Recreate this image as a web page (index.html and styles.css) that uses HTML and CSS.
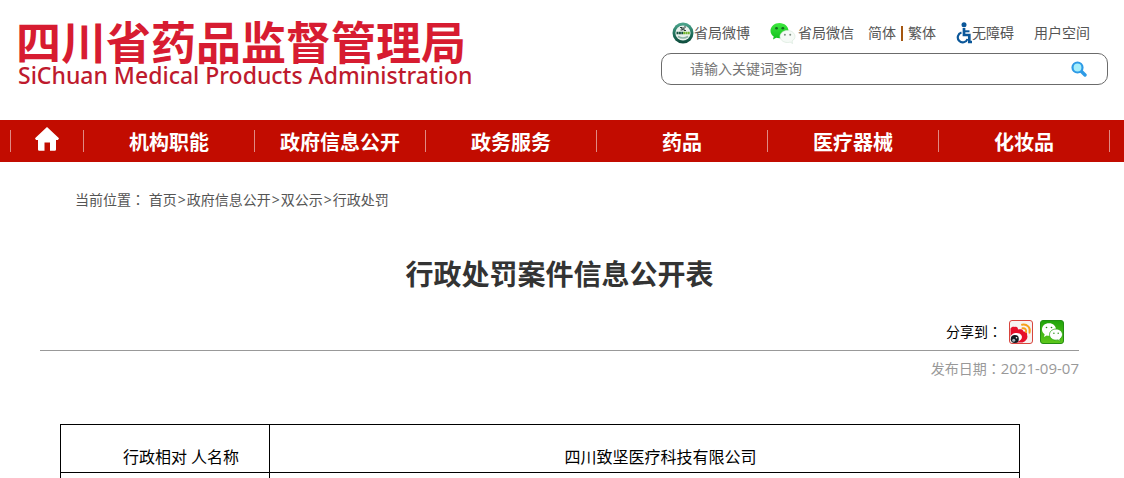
FILE: index.html
```html
<!DOCTYPE html>
<html lang="zh-CN">
<head>
<meta charset="utf-8">
<title>行政处罚案件信息公开表</title>
<link rel="stylesheet" href="styles.css">
</head>
<body>
<header class="header">
  <div class="brand">
    <div class="brand-cn">四川省药品监督管理局</div>
    <div class="brand-en">SiChuan Medical Products Administration</div>
  </div>
  <div class="tools">
    <div class="links">
      <a class="link weibo" href="#">
        <svg width="22" height="22" viewBox="0 0 22 22" aria-hidden="true">
          <defs><linearGradient id="ring" x1="0" y1="0" x2="0" y2="1"><stop offset="0" stop-color="#4fa88f"/><stop offset=".6" stop-color="#1c6b57"/><stop offset="1" stop-color="#0e4a3b"/></linearGradient></defs>
          <circle cx="11" cy="11" r="10.5" fill="url(#ring)"/>
          <circle cx="11" cy="11" r="7.600" fill="#e9f1ec"/>
          <path d="M8 5.500h2M12 5h2M8.500 8h2l-1-2M12 6v2.500h2M11 5v3" stroke="#2b3b36" stroke-width="1" fill="none"/>
          <path d="M4.500 11h6.500" stroke="#17523f" stroke-width="2.600" stroke-dasharray="2 .4"/>
          <path d="M11.200 11h6.500" stroke="#6fb32e" stroke-width="2.600" stroke-dasharray="2 .4"/>
          <path d="M6 14.500q5 3 10 0" stroke="#8fb5a7" stroke-width="1.500" fill="none"/>
        </svg>省局微博</a>
      <a class="link wechat" href="#">
        <svg width="26" height="22" viewBox="0 0 26 22" aria-hidden="true">
          <defs><linearGradient id="green" x1="0" y1="0" x2="0" y2="1"><stop offset="0" stop-color="#3fe83f"/><stop offset="1" stop-color="#10c01c"/></linearGradient></defs>
          <path d="M9.500 1C4.500 1 .5 4.500.5 8.700c0 2.400 1.200 4.400 3.200 5.800L3 17.500l3.200-1.700c1 .3 2.200.5 3.300.5 5 0 9-3.500 9-7.600S14.500 1 9.500 1z" fill="url(#green)"/>
          <ellipse cx="6.500" cy="6.200" rx="1.400" ry="1.200" fill="#126b1d"/><ellipse cx="12.800" cy="6.200" rx="1.400" ry="1.200" fill="#126b1d"/>
          <path d="M17.500 8.500c-4.200 0-7.500 2.700-7.500 6s3.300 6 7.500 6c.9 0 1.800-.1 2.600-.4l2.500 1.400-.6-2.500c1.800-1 3-2.700 3-4.500 0-3.300-3.300-6-7.500-6z" fill="#f5faf6" stroke="#d3e6d7" stroke-width=".6"/>
          <circle cx="14.900" cy="12.800" r="1" fill="#7f9083"/><circle cx="20.200" cy="12.800" r="1" fill="#7f9083"/>
        </svg>省局微信</a>
      <span class="lang"><a class="link" href="#">简体</a><span class="bar"></span><a class="link" href="#">繁体</a></span>
      <a class="link access" href="#">
        <svg width="16" height="22" viewBox="0 0 16 22" aria-hidden="true">
          <circle cx="8" cy="2.700" r="2.500" fill="#0b5799"/>
          <path d="M8 6v7h5.300v7H16" fill="none" stroke="#0b5799" stroke-width="2.700"/>
          <path d="M8 9.300h5.500" stroke="#0b5799" stroke-width="2"/>
          <path d="M5.500 10.500a5 5 0 1 0 6 6.500" fill="none" stroke="#0b5799" stroke-width="2.200"/>
        </svg>无障碍</a>
      <a class="link" href="#">用户空间</a>
    </div>
    <form class="search">
      <input class="search-input" type="text" placeholder="请输入关键词查询" aria-label="请输入关键词查询">
      <button class="search-button" type="button" aria-label="搜索">
        <svg width="16" height="16" viewBox="0 0 16 16" aria-hidden="true">
          <path d="M10 10l4 4" stroke="#2e9be6" stroke-width="3.400" stroke-linecap="round"/>
          <circle cx="6.500" cy="6.500" r="5" fill="#a5eefb" stroke="#2e9be6" stroke-width="2.200"/>
        </svg>
      </button>
    </form>
  </div>
</header>
<nav class="nav">
  <a class="nav-item nav-home" href="#" aria-label="首页">
    <svg width="24" height="24" viewBox="0 0 24 24" aria-hidden="true"><path d="M12 0L24 11.200 23 13h-2v9.500q0 1.200-1.200 1.200H15V15.500H9.500v8.200H4.200Q3 23.700 3 22.500V13H1L0 11.200z" fill="#fff"/></svg>
  </a>
  <a class="nav-item" href="#">机构职能</a>
  <a class="nav-item" href="#">政府信息公开</a>
  <a class="nav-item" href="#">政务服务</a>
  <a class="nav-item" href="#">药品</a>
  <a class="nav-item" href="#">医疗器械</a>
  <a class="nav-item" href="#">化妆品</a>
</nav>
<main class="main">
  <div class="crumbs">当前位置<span class="colon" lang="zh-TW">：</span> <a class="link" href="#">首页</a><span class="sep">&gt;</span><a class="link" href="#">政府信息公开</a><span class="sep">&gt;</span><a class="link" href="#">双公示</a><span class="sep">&gt;</span><a class="link" href="#">行政处罚</a></div>
  <h1 class="title">行政处罚案件信息公开表</h1>
  <div class="share">
    <span>分享到<span class="colon" lang="zh-TW">：</span></span>
    <a class="share-link" href="#" aria-label="微博">
      <svg width="24" height="24" viewBox="0 0 24 24" aria-hidden="true">
        <rect x=".5" y=".5" width="23" height="23" rx="2.500" fill="#f7f3f2" stroke="#d8453e"/>
        <path d="M1.500 8.500c1-2 3-2 4.500-1.500 1.500-.6 3 .3 3 2.500 2.500-.5 5-.3 5.500 2 2.800 0 4 1.600 3.500 3.500 1.300 2.500-.5 6-4.500 7.500H5L1.500 20z" fill="#e60f2a"/>
        <ellipse cx="7" cy="17.500" rx="6" ry="4.500" fill="#fff" transform="rotate(-12 7 17.500)"/>
        <circle cx="5.800" cy="19" r="4" fill="#151b20"/>
        <circle cx="4.700" cy="20.200" r="1.500" fill="#a7b8c2"/><circle cx="7.500" cy="17.700" r=".8" fill="#fff"/>
        <path d="M13 4.700c5-1 9 3 7.500 8M13.500 8.300c2.500-.4 4.200 1.400 3.500 3.700" fill="none" stroke="#f7a01c" stroke-width="1.900" stroke-linecap="round"/>
      </svg>
    </a>
    <a class="share-link" href="#" aria-label="微信">
      <svg width="24" height="24" viewBox="0 0 24 24" aria-hidden="true">
        <defs><linearGradient id="tile" x1="0" y1="0" x2="0" y2="1"><stop offset="0" stop-color="#1fa30b"/><stop offset="1" stop-color="#5fc81b"/></linearGradient></defs>
        <rect x=".5" y=".5" width="23" height="23" rx="2.500" fill="url(#tile)" stroke="#238d13"/>
        <path d="M9 3.200c-4.200 0-7 2.700-7 6.200 0 2 1 3.700 2.600 4.800L4 17l2.700-1.500c.7.200 1.500.3 2.300.3 4 0 7-2.700 7-6.300S13 3.200 9 3.200z" fill="#fff"/>
        <circle cx="6.500" cy="7.500" r=".8" fill="#238d13"/><circle cx="11.500" cy="7.500" r=".8" fill="#238d13"/>
        <path d="M16 9c-3.600 0-6.500 2.500-6.500 5.600s2.900 5.600 6.500 5.600c.7 0 1.400-.1 2-.3l2.300 1.500-.5-2.400c1.600-1 2.700-2.600 2.700-4.400C22.500 11.500 19.600 9 16 9z" fill="#fff" stroke="#2ba512" stroke-width=".8"/>
        <circle cx="13.900" cy="13.200" r=".7" fill="#238d13"/><circle cx="18.200" cy="13.200" r=".7" fill="#238d13"/>
      </svg>
    </a>
  </div>
  <div class="date">发布日期<span class="colon" lang="zh-TW">：</span><time class="day" datetime="2021-09-07">2021-09-07</time></div>
  <table class="info">
    <tbody>
      <tr><th class="cell name" scope="row">行政相对 人名称</th><td class="cell">四川致坚医疗科技有限公司</td></tr>
      <tr><th class="cell name" scope="row"></th><td class="cell"></td></tr>
    </tbody>
  </table>
</main>
</body>
</html>
```
FILE: styles.css
```css
* {
  box-sizing: border-box;
}

body {
  margin: 0;
  height: 100vh;
  overflow: hidden;
  background: #fff;
  color: #555;
  font: 14px/20px "Open Sans", "Noto Sans CJK SC", sans-serif;
}

svg {
  display: block;
  flex: none;
}

.link {
  color: inherit;
  text-decoration: none;
}

.colon {
  font-family: "Noto Sans CJK TC", sans-serif;
  line-height: 1;
}

.header {
  display: flex;
  justify-content: space-between;
  height: 120px;
  padding: 18px 16px 0;
}

.brand {
  white-space: nowrap;
}

.brand-cn {
  color: #d71c31;
  font: 700 45px/45px "Noto Sans CJK SC", sans-serif;
}

.brand-en {
  padding-left: 2px;
  color: #be1a2d;
  font: 500 23px/24px "Noto Sans", sans-serif;
}

.tools {
  width: 447px;
  padding-top: 4px;
}

.links {
  display: flex;
  align-items: center;
  gap: 20px;
  height: 22px;
  padding-left: 11px;
  white-space: nowrap;
}

.weibo,
.wechat,
.access,
.lang {
  display: flex;
  align-items: center;
}

.wechat {
  gap: 2px;
}

.lang {
  margin-left: -6px;
}

.bar {
  width: 2px;
  height: 15px;
  margin: 0 5px;
  background: #a5560f;
}

.search {
  display: flex;
  align-items: center;
  height: 32px;
  margin-top: 9px;
  padding: 0 20px 0 28px;
  border: 1px solid #6b6b6b;
  border-radius: 10px;
}

.search-input {
  flex: 1;
  min-width: 0;
  padding: 0;
  border: 0;
  outline: 0;
  background: none;
  color: #555;
  font: inherit;
}

.search-input::placeholder {
  color: #757575;
}

.search-button {
  padding: 0;
  border: 0;
  background: none;
}

.nav {
  display: flex;
  align-items: center;
  height: 42px;
  padding: 0 14px 0 10px;
  background: #c20c00;
}

.nav-item {
  display: flex;
  flex: 1;
  align-items: center;
  justify-content: center;
  height: 22px;
  padding-top: 3px;
  border-left: 1px solid #e08a84;
  color: #fff;
  font-size: 20px;
  font-weight: 700;
  text-decoration: none;
  white-space: nowrap;
}

.nav-item:last-child {
  border-right: 1px solid #e08a84;
}

.nav-home {
  flex: 0 0 73px;
  padding: 0 0 4px;
}

.main {
  padding: 28px 45px 0 40px;
}

.crumbs {
  padding-left: 35px;
}

.sep {
  padding: 0 1px;
}

.title {
  margin: 44px 0 24px;
  color: #333;
  font-size: 28px;
  line-height: 40px;
  text-align: center;
}

.share {
  display: flex;
  align-items: center;
  justify-content: flex-end;
  gap: 7px;
  padding: 2px 15px 6px 0;
  border-bottom: 1px solid #999;
  color: #000;
}

.date {
  padding-top: 8px;
  color: #999;
  text-align: right;
}

.day {
  font-size: 15px;
  line-height: 1;
}

.info {
  width: calc(100% - 79px);
  margin: 45px 0 0 20px;
  border-collapse: collapse;
  table-layout: fixed;
  color: #000;
  font-size: 16px;
}

.cell {
  height: 48px;
  padding: 0 0 5px;
  border: 1px solid #000;
  font-weight: 400;
  text-align: center;
  text-indent: 32px;
  vertical-align: bottom;
}

.name {
  width: 209px;
}
```
